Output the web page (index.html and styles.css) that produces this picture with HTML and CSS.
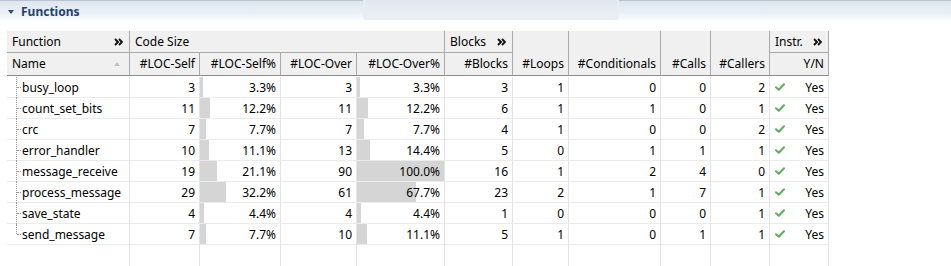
FILE: index.html
```html
<!DOCTYPE html>
<html>
<head>
<meta charset="utf-8">
<link rel="stylesheet" href="styles.css">
</head>
<body>
<div class="section">
  <span class="tri"></span>
  <span class="title">Functions</span>
  <div class="ghost"></div>
</div>
<div class="table">
  <div class="thead">
    <div class="hc g1"><span>Function</span><svg class="chev" width="9" height="8" viewBox="0 0 9 8"><path d="M1 1L4 4L1 7M5 1L8 4L5 7"/></svg></div>
    <div class="hc g1 wide4"><span>Code Size</span></div>
    <div class="hc g1"><span>Blocks</span><svg class="chev" width="9" height="8" viewBox="0 0 9 8"><path d="M1 1L4 4L1 7M5 1L8 4L5 7"/></svg></div>
    <div class="hc tall"><span>#Loops</span></div>
    <div class="hc tall"><span>#Conditionals</span></div>
    <div class="hc tall"><span>#Calls</span></div>
    <div class="hc tall"><span>#Callers</span></div>
    <div class="hc g1"><span>Instr.</span><svg class="chev" width="9" height="8" viewBox="0 0 9 8"><path d="M1 1L4 4L1 7M5 1L8 4L5 7"/></svg></div>
    <div class="hc g2 left"><span>Name</span><span class="sort"></span></div>
    <div class="hc g2"><span>#LOC-Self</span></div>
    <div class="hc g2"><span>#LOC-Self%</span></div>
    <div class="hc g2"><span>#LOC-Over</span></div>
    <div class="hc g2"><span>#LOC-Over%</span></div>
    <div class="hc g2"><span>#Blocks</span></div>
    <div class="hc g2"><span>Y/N</span></div>
  </div>
  <div class="tbody">
    <div class="row">
      <div class="c name"><span>busy_loop</span></div><div class="c">3</div>
      <div class="c pct"><i class="bar" style="width:3.3%"></i><span>3.3%</span></div>
      <div class="c">3</div>
      <div class="c pct"><i class="bar" style="width:3.3%"></i><span>3.3%</span></div>
      <div class="c">3</div><div class="c">1</div><div class="c">0</div><div class="c">0</div><div class="c">2</div>
      <div class="c yn"><svg class="chk" width="10" height="8" viewBox="0 0 10 8"><path d="M1 4.2L3.8 6.8L9 1.2"/></svg><span>Yes</span></div>
    </div>
    <div class="row">
      <div class="c name"><span>count_set_bits</span></div><div class="c">11</div>
      <div class="c pct"><i class="bar" style="width:12.2%"></i><span>12.2%</span></div>
      <div class="c">11</div>
      <div class="c pct"><i class="bar" style="width:12.2%"></i><span>12.2%</span></div>
      <div class="c">6</div><div class="c">1</div><div class="c">1</div><div class="c">0</div><div class="c">1</div>
      <div class="c yn"><svg class="chk" width="10" height="8" viewBox="0 0 10 8"><path d="M1 4.2L3.8 6.8L9 1.2"/></svg><span>Yes</span></div>
    </div>
    <div class="row">
      <div class="c name"><span>crc</span></div><div class="c">7</div>
      <div class="c pct"><i class="bar" style="width:7.7%"></i><span>7.7%</span></div>
      <div class="c">7</div>
      <div class="c pct"><i class="bar" style="width:7.7%"></i><span>7.7%</span></div>
      <div class="c">4</div><div class="c">1</div><div class="c">0</div><div class="c">0</div><div class="c">2</div>
      <div class="c yn"><svg class="chk" width="10" height="8" viewBox="0 0 10 8"><path d="M1 4.2L3.8 6.8L9 1.2"/></svg><span>Yes</span></div>
    </div>
    <div class="row">
      <div class="c name"><span>error_handler</span></div><div class="c">10</div>
      <div class="c pct"><i class="bar" style="width:11.1%"></i><span>11.1%</span></div>
      <div class="c">13</div>
      <div class="c pct"><i class="bar" style="width:14.4%"></i><span>14.4%</span></div>
      <div class="c">5</div><div class="c">0</div><div class="c">1</div><div class="c">1</div><div class="c">1</div>
      <div class="c yn"><svg class="chk" width="10" height="8" viewBox="0 0 10 8"><path d="M1 4.2L3.8 6.8L9 1.2"/></svg><span>Yes</span></div>
    </div>
    <div class="row">
      <div class="c name"><span>message_receive</span></div><div class="c">19</div>
      <div class="c pct"><i class="bar" style="width:21.1%"></i><span>21.1%</span></div>
      <div class="c">90</div>
      <div class="c pct"><i class="bar" style="width:100%"></i><span>100.0%</span></div>
      <div class="c">16</div><div class="c">1</div><div class="c">2</div><div class="c">4</div><div class="c">0</div>
      <div class="c yn"><svg class="chk" width="10" height="8" viewBox="0 0 10 8"><path d="M1 4.2L3.8 6.8L9 1.2"/></svg><span>Yes</span></div>
    </div>
    <div class="row">
      <div class="c name"><span>process_message</span></div><div class="c">29</div>
      <div class="c pct"><i class="bar" style="width:32.2%"></i><span>32.2%</span></div>
      <div class="c">61</div>
      <div class="c pct"><i class="bar" style="width:67.7%"></i><span>67.7%</span></div>
      <div class="c">23</div><div class="c">2</div><div class="c">1</div><div class="c">7</div><div class="c">1</div>
      <div class="c yn"><svg class="chk" width="10" height="8" viewBox="0 0 10 8"><path d="M1 4.2L3.8 6.8L9 1.2"/></svg><span>Yes</span></div>
    </div>
    <div class="row">
      <div class="c name"><span>save_state</span></div><div class="c">4</div>
      <div class="c pct"><i class="bar" style="width:4.4%"></i><span>4.4%</span></div>
      <div class="c">4</div>
      <div class="c pct"><i class="bar" style="width:4.4%"></i><span>4.4%</span></div>
      <div class="c">1</div><div class="c">0</div><div class="c">0</div><div class="c">0</div><div class="c">1</div>
      <div class="c yn"><svg class="chk" width="10" height="8" viewBox="0 0 10 8"><path d="M1 4.2L3.8 6.8L9 1.2"/></svg><span>Yes</span></div>
    </div>
    <div class="row">
      <div class="c name last"><span>send_message</span></div><div class="c">7</div>
      <div class="c pct"><i class="bar" style="width:7.7%"></i><span>7.7%</span></div>
      <div class="c">10</div>
      <div class="c pct"><i class="bar" style="width:11.1%"></i><span>11.1%</span></div>
      <div class="c">5</div><div class="c">1</div><div class="c">0</div><div class="c">1</div><div class="c">1</div>
      <div class="c yn"><svg class="chk" width="10" height="8" viewBox="0 0 10 8"><path d="M1 4.2L3.8 6.8L9 1.2"/></svg><span>Yes</span></div>
    </div>
    <div class="row filler">
      <div class="c"></div><div class="c"></div><div class="c"></div><div class="c"></div><div class="c"></div><div class="c"></div><div class="c"></div><div class="c"></div><div class="c"></div><div class="c"></div><div class="c"></div>
    </div>
  </div>
</div>
</body>
</html>
```

FILE: styles.css
```css
* { box-sizing: border-box; }
html, body { margin: 0; padding: 0; background: #fff; }
body {
  font-family: "Noto Sans", "Liberation Sans", sans-serif;
  font-size: 12px;
  color: #000;
  width: 951px;
  height: 266px;
  overflow: hidden;
}
.section {
  height: 22px;
  border-top: 1px solid #b7c3d1;
  background: linear-gradient(#dfe6ef 0%, #eaeff5 55%, #ffffff 100%);
  display: flex;
  align-items: center;
  padding-left: 8px;
}
.tri {
  width: 0; height: 0;
  border-left: 3.5px solid transparent;
  border-right: 3.5px solid transparent;
  border-top: 4px solid #2c4a72;
  margin-right: 7px;
  margin-top: 1px;
}
.title {
  font-weight: bold;
  color: #24426b;
  font-size: 12px;
}
.ghost {
  margin-left: 283px;
  width: 256px;
  height: 20px;
  margin-top: -1px;
  align-self: flex-start;
  border: 2px solid #e8edf3;
  border-top: none;
  border-radius: 0 0 4px 4px;
  background: linear-gradient(#e2e8f0, #ebeff5);
}
.table {
  margin: 9px 0 0 7px;
  width: 822px;
}
.thead, .row {
  display: grid;
  grid-template-columns: 123px 70px 81px 76px 88px 68px 56px 92px 50px 59px 59px;
}
.thead {
  grid-template-rows: 22px 23px;
  background: #f0f0f0;
}
.hc {
  border-right: 1px solid #a9a9a9;
  border-bottom: 1px solid #a9a9a9;
  display: flex;
  align-items: center;
  justify-content: flex-end;
  padding: 0 4px 0 3px;
  white-space: nowrap;
  line-height: 20px;
}
.hc.g1 { justify-content: space-between; padding-left: 5px; padding-right: 6px; }
.hc.wide4 { grid-column: span 4; }
.hc.g2 { border-bottom-color: #8a8a8a; }
.hc.g2.left { justify-content: space-between; padding-left: 5px; padding-right: 9px; }
.hc.tall {
  grid-row: span 2;
  align-items: flex-end;
  padding-bottom: 1px;
  border-bottom-color: #8a8a8a;
}
.chev path { fill: none; stroke: #111; stroke-width: 1.9; }
.sort {
  width: 0; height: 0;
  border-left: 3.5px solid transparent;
  border-right: 3.5px solid transparent;
  border-bottom: 4px solid #c2c2c2;
}
.tbody { padding-top: 1px; }
.row { height: 21px; }
.c {
  position: relative;
  border-right: 1px solid #e4e4e4;
  border-bottom: 1px solid #ebebeb;
  display: flex;
  align-items: center;
  justify-content: flex-end;
  padding-right: 4px;
  white-space: nowrap;
}
.c span { position: relative; }
.bar {
  position: absolute;
  left: 0; top: 0; bottom: 0;
  background: #d5d5d5;
}
.name { justify-content: flex-start; padding-left: 15px; }
.name::before {
  content: "";
  position: absolute;
  left: 9px; top: 0; bottom: -1px;
  border-left: 1px dotted #9a9a9a;
}
.name.last::before { bottom: 10px; }
.name::after {
  content: "";
  position: absolute;
  left: 10px; top: 10px;
  width: 4px;
  border-top: 1px dotted #9a9a9a;
}
.yn { justify-content: space-between; padding-left: 5px; }
.chk path { fill: none; stroke: #5fae5f; stroke-width: 2; stroke-linecap: round; stroke-linejoin: round; }
.filler { height: 30px; }
.filler .c { border-bottom: none; }
```
